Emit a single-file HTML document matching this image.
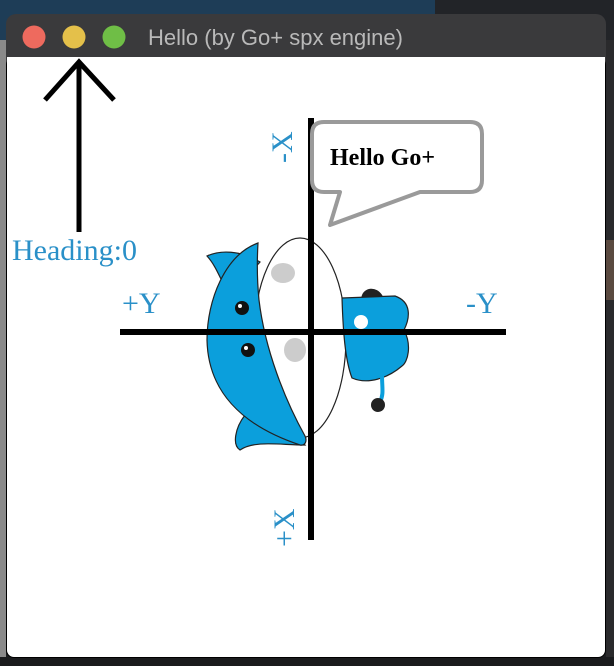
<!DOCTYPE html>
<html><head><meta charset="utf-8"><style>
html,body{margin:0;padding:0;width:614px;height:666px;overflow:hidden;background:#1c1d1f;}
</style></head><body>
<svg width="614" height="666" xmlns="http://www.w3.org/2000/svg" style="position:absolute;left:0;top:0">
<rect x="0" y="0" width="614" height="40" fill="#1e3d57"/>
<rect x="435" y="0" width="179" height="40" fill="#222428"/>
<rect x="0" y="40" width="6" height="626" fill="#8a8a8a"/>
<rect x="606" y="40" width="8" height="626" fill="#2a2a2c"/>
<rect x="606" y="240" width="8" height="60" fill="#5a4a40"/>
<rect x="0" y="657" width="614" height="9" fill="#1a1b1d"/>
<rect x="6" y="14" width="600" height="644" rx="10" fill="#3a3a3c"/>
<rect x="6" y="57" width="600" height="601" rx="8" fill="#000"/>
<rect x="7" y="57" width="598" height="600" rx="7" fill="#fff"/>
<rect x="7" y="57" width="598" height="10" fill="#fff"/>
<circle cx="34" cy="37" r="11.5" fill="#ee6a5e"/>
<circle cx="74" cy="37" r="11.5" fill="#e4c04a"/>
<circle cx="114" cy="37" r="11.5" fill="#6fbe46"/>
<text x="148" y="45" font-family="Liberation Sans, sans-serif" font-size="22" fill="#b9b9b9">Hello (by Go+ spx engine)</text>
<g stroke="#000" stroke-width="5" fill="none">
<line x1="79" y1="61" x2="79" y2="232"/>
<polyline points="45,100 79,62 114,100"/>
</g>
<text x="12" y="260" font-family="Liberation Serif, serif" font-size="30" fill="#2a90c8">Heading:0</text>
<g stroke="#222" stroke-width="1.2">
<path d="M260,262 C240,250 220,250 207,256 C218,268 222,285 230,295 Z" fill="#0b9fdc"/>
<path d="M245,415 C235,428 232,445 240,450 C255,440 280,445 305,445 C290,428 265,418 245,415 Z" fill="#0b9fdc"/>
<ellipse cx="300" cy="338" rx="46" ry="100" fill="#fff"/>
<path d="M258,243 C225,255 207,300 207,340 C208,390 240,425 300,445 C306,446 307,440 305,436 C285,400 265,350 259,300 C257,280 257,260 258,243 Z" fill="#0b9fdc"/>
<path d="M342,298 L395,296 C412,302 410,318 404,330 C412,345 408,362 402,366 C388,378 368,385 352,378 C345,360 343,330 342,298 Z" fill="#0b9fdc"/>
<path d="M362,297 C364,288 376,286 382,296 Z" fill="#222"/>
<path d="M382,375 C382,388 384,394 380,402" fill="none" stroke="#0b9fdc" stroke-width="4"/>
</g>
<ellipse cx="283" cy="273" rx="12" ry="10" fill="#ccc"/>
<ellipse cx="295" cy="350" rx="11" ry="12" fill="#ccc"/>
<circle cx="242" cy="308" r="7" fill="#111"/><circle cx="240" cy="306" r="2" fill="#fff"/>
<circle cx="248" cy="350" r="7" fill="#111"/><circle cx="246" cy="348" r="2" fill="#fff"/>
<circle cx="378" cy="405" r="7" fill="#222"/>
<circle cx="361" cy="322" r="7" fill="#fff"/>
<rect x="120" y="329" width="386" height="6" fill="#000"/>
<rect x="308" y="118" width="6" height="422" fill="#000"/>
<g font-family="Liberation Serif, serif" font-size="30" fill="#2a90c8">
<text x="122" y="313">+Y</text>
<text x="466" y="313">-Y</text>
<text transform="translate(292,163) rotate(-90)">-X</text>
<text transform="translate(294,547) rotate(-90)">+X</text>
</g>
<path d="M324,122 L470,122 Q482,122 482,134 L482,180 Q482,192 470,192 L420,192 L330,225 L340,192 L324,192 Q312,192 312,180 L312,134 Q312,122 324,122 Z" fill="#fff" stroke="#9a9a9a" stroke-width="4" stroke-linejoin="round"/>
<text x="330" y="165" font-family="Liberation Serif, serif" font-size="24" font-weight="bold" fill="#000">Hello Go+</text>
</svg>
</body></html>
